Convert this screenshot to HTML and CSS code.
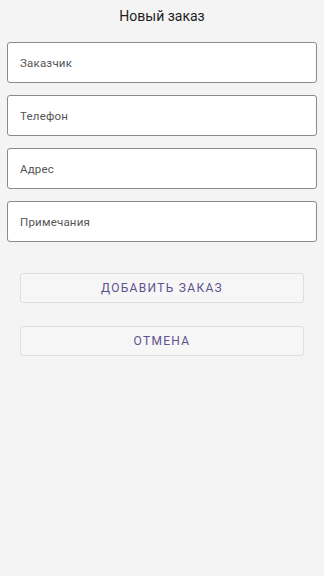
FILE: index.html
```html
<!DOCTYPE html>
<html lang="ru">
<head>
  <meta charset="UTF-8">
  <title>Новый заказ</title>
  <link rel="stylesheet" href="styles.css">
</head>
<body>
  <div class="screen">
    <!-- Header -->
    <div class="header">Новый заказ</div>

    <!-- Order fields -->
    <div class="fields">
      <input class="field" type="text" placeholder="Заказчик">
      <input class="field" type="tel" placeholder="Телефон">
      <input class="field" type="text" placeholder="Адрес">
      <input class="field" type="text" placeholder="Примечания">
    </div>

    <!-- Actions -->
    <div class="actions">
      <button class="action">Добавить заказ</button>
      <button class="action">Отмена</button>
    </div>
  </div>
</body>
</html>
```
FILE: styles.css
```css
body { margin: 0; background: #f4f4f4; font-family: Roboto, "Noto Sans", sans-serif; }
.screen { display: flex; flex-direction: column; }
.header { height: 32px; line-height: 32px; text-align: center; font-size: 14px; color: #1e1e1e; }
.fields { display: flex; flex-direction: column; gap: 12px; padding: 10px 7px 0; }
.field { height: 41px; box-sizing: border-box; border: 1px solid #8a8a8a; border-radius: 3px; background: #fff; padding: 0 12px; font-family: inherit; font-size: 11.5px; letter-spacing: 0.2px; color: #333; outline: none; }
.field::placeholder { color: #555; }
.actions { display: flex; flex-direction: column; gap: 23px; padding: 31px 20px 0; }
.action { height: 30px; box-sizing: border-box; border: 1px solid #dedede; border-radius: 3px; background: #f6f6f6; color: #5d5190; font-family: inherit; font-size: 12px; letter-spacing: 1.3px; text-transform: uppercase; }
```
